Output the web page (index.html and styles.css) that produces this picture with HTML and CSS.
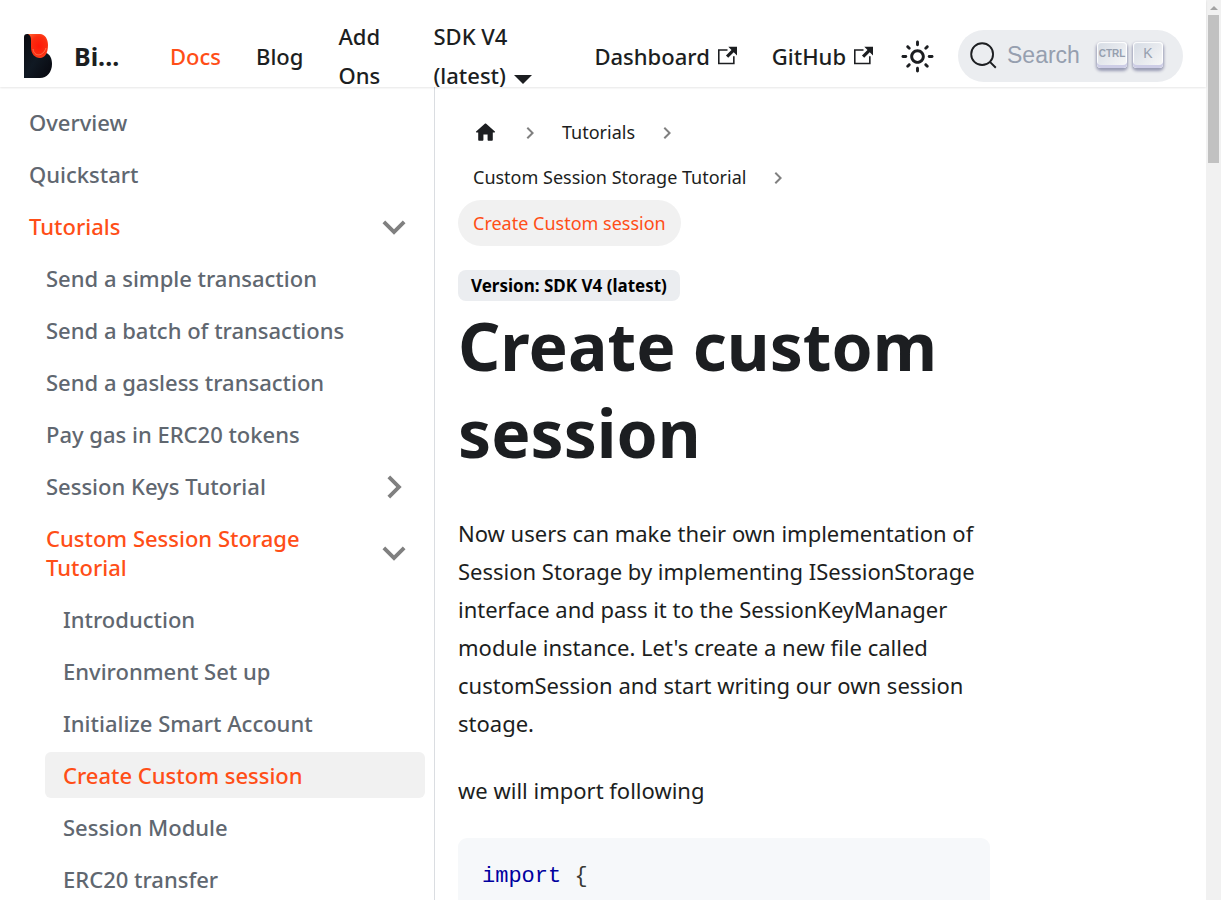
FILE: index.html
```html
<!DOCTYPE html>
<html lang="en">
<head>
<meta charset="utf-8">
<meta name="viewport" content="width=device-width, initial-scale=1">
<title>Create custom session</title>
<link rel="stylesheet" href="styles.css">
</head>
<body>
<svg class="defs" aria-hidden="true">
  <symbol id="chevron" viewBox="0 0 24 24"><path fill="currentColor" d="M7.41 15.41 12 10.83l4.59 4.58L18 14l-6-6-6 6z"/></symbol>
  <symbol id="external" viewBox="0 0 24 24"><path fill="currentColor" d="M21 13v10h-21v-19h12v2h-10v15h17v-8h2zm3-12h-10.988l4.035 4-6.977 7.07 2.828 2.828 6.977-7.07 4.125 4.172v-11z"/></symbol>
</svg>
<div class="app">
  <header class="navbar">
    <a class="brand" href="#">
      <svg class="logo" viewBox="0 0 29 45" aria-hidden="true">
        <defs>
          <linearGradient id="ink" x1="0" y1="0" x2="1" y2="1"><stop offset="0" stop-color="#0b0a10"/><stop offset=".5" stop-color="#101923"/><stop offset="1" stop-color="#07070d"/></linearGradient>
          <radialGradient id="flame" cx=".55" cy=".5" r=".65"><stop offset="0" stop-color="#ff1808"/><stop offset=".6" stop-color="#fb2d10"/><stop offset="1" stop-color="#ff5a2c"/></radialGradient>
        </defs>
        <path fill="url(#ink)" d="M0 3Q0 0 3 0h10l9 19c4 1 6 6 6 11 0 8-5 14-12 14H0z"/>
        <path fill="url(#flame)" d="M4 0h12c5 0 8 5 8 11 0 8-3 13-8 13S7 20 7 13V6C7 3 6 1 4 0z"/>
        <path fill="none" stroke="#ff704c" stroke-width="1" d="M9 15c1 8 10 8 13-1"/>
      </svg>
      <b class="brand-name">Bi...</b>
    </a>
    <nav class="links" aria-label="Main">
      <a class="active" href="#">Docs</a>
      <a href="#">Blog</a>
      <a class="addons" href="#">Add Ons</a>
      <a class="version-menu" href="#">SDK V4 (latest)<span class="caret"></span></a>
      <a href="#">Dashboard<svg class="ext" aria-hidden="true"><use href="#external"/></svg></a>
      <a href="#">GitHub<svg class="ext" aria-hidden="true"><use href="#external"/></svg></a>
    </nav>
    <div class="tools">
      <button class="theme" type="button" aria-label="Switch theme">
        <svg viewBox="0 0 24 24" aria-hidden="true"><path fill="currentColor" d="M12,9c1.65,0,3,1.35,3,3s-1.35,3-3,3s-3-1.35-3-3S10.35,9,12,9 M12,7c-2.76,0-5,2.24-5,5s2.24,5,5,5s5-2.24,5-5 S14.76,7,12,7L12,7z M2,13l2,0c0.55,0,1-0.45,1-1s-0.45-1-1-1l-2,0c-0.55,0-1,0.45-1,1S1.45,13,2,13z M20,13l2,0c0.55,0,1-0.45,1-1 s-0.45-1-1-1l-2,0c-0.55,0-1,0.45-1,1S19.45,13,20,13z M11,2v2c0,0.55,0.45,1,1,1s1-0.45,1-1V2c0-0.55-0.45-1-1-1S11,1.45,11,2z M11,20v2c0,0.55,0.45,1,1,1s1-0.45,1-1v-2c0-0.55-0.45-1-1-1C11.45,19,11,19.45,11,20z M5.99,4.58c-0.39-0.39-1.03-0.39-1.41,0 c-0.39,0.39-0.39,1.03,0,1.41l1.06,1.06c0.39,0.39,1.03,0.39,1.41,0s0.39-1.03,0-1.41L5.99,4.58z M18.36,16.95 c-0.39-0.39-1.03-0.39-1.41,0c-0.39,0.39-0.39,1.03,0,1.41l1.06,1.06c0.39,0.39,1.03,0.39,1.41,0c0.39-0.39,0.39-1.03,0-1.41 L18.36,16.95z M19.42,5.99c0.39-0.39,0.39-1.03,0-1.41c-0.39-0.39-1.03-0.39-1.41,0l-1.06,1.06c-0.39,0.39-0.39,1.03,0,1.41 s1.03,0.39,1.41,0L19.42,5.99z M7.05,18.36c0.39-0.39,0.39-1.03,0-1.41c-0.39-0.39-1.03-0.39-1.41,0l-1.06,1.06 c-0.39,0.39-0.39,1.03,0,1.41s1.03,0.39,1.41,0L7.05,18.36z"/></svg>
      </button>
      <button class="search" type="button">
        <svg viewBox="0 0 20 20" aria-hidden="true"><path d="M14.386 14.386l4.0877 4.0877-4.0877-4.0877c-2.9418 2.9419-7.7115 2.9419-10.6533 0-2.9419-2.9418-2.9419-7.7115 0-10.6533 2.9418-2.9419 7.7115-2.9419 10.6533 0 2.9419 2.9418 2.9419 7.7115 0 10.6533z" stroke="currentColor" fill="none" stroke-width="1.3"/></svg>
        <span>Search</span>
        <kbd class="ctrl">CTRL</kbd><kbd>K</kbd>
      </button>
    </div>
  </header>
  <div class="body">
    <aside class="sidebar">
      <ul class="menu">
        <li><a href="#">Overview</a></li>
        <li><a href="#">Quickstart</a></li>
        <li>
          <a class="on" href="#">Tutorials<svg class="chev down" aria-hidden="true"><use href="#chevron"/></svg></a>
          <ul class="menu sub">
            <li><a href="#">Send a simple transaction</a></li>
            <li><a href="#">Send a batch of transactions</a></li>
            <li><a href="#">Send a gasless transaction</a></li>
            <li><a href="#">Pay gas in ERC20 tokens</a></li>
            <li><a href="#">Session Keys Tutorial<svg class="chev right" aria-hidden="true"><use href="#chevron"/></svg></a></li>
            <li>
              <a class="on" href="#">Custom Session Storage Tutorial<svg class="chev down" aria-hidden="true"><use href="#chevron"/></svg></a>
              <ul class="menu sub">
                <li><a href="#">Introduction</a></li>
                <li><a href="#">Environment Set up</a></li>
                <li><a href="#">Initialize Smart Account</a></li>
                <li><a class="on current" href="#">Create Custom session</a></li>
                <li><a href="#">Session Module</a></li>
                <li><a href="#">ERC20 transfer</a></li>
              </ul>
            </li>
          </ul>
        </li>
      </ul>
    </aside>
    <main class="content">
      <nav aria-label="Breadcrumbs">
        <ul class="crumbs">
          <li><a href="#" aria-label="Home"><svg class="home" viewBox="0 0 24 24" aria-hidden="true"><path fill="currentColor" d="M10 19v-5h4v5c0 .55.45 1 1 1h3c.55 0 1-.45 1-1v-7h1.700c.46 0 .68-.57.33-.87L12.670 3.600c-.38-.34-.96-.34-1.340 0l-8.360 7.530c-.34.3-.13.87.33.87H5v7c0 .55.45 1 1 1h3c.55 0 1-.45 1-1z"/></svg></a><svg class="sep" aria-hidden="true"><use href="#chevron"/></svg></li>
          <li><a href="#">Tutorials</a><svg class="sep" aria-hidden="true"><use href="#chevron"/></svg></li>
          <li><a href="#">Custom Session Storage Tutorial</a><svg class="sep" aria-hidden="true"><use href="#chevron"/></svg></li>
          <li><span class="here">Create Custom session</span></li>
        </ul>
      </nav>
      <span class="badge">Version: SDK V4 (latest)</span>
      <h1>Create custom session</h1>
      <p>Now users can make their own implementation of Session Storage by implementing ISessionStorage interface and pass it to the SessionKeyManager module instance. Let's create a new file called customSession and start writing our own session stoage.</p>
      <p>we will import following</p>
      <pre><code><span class="kw">import</span> {</code></pre>
    </main>
  </div>
</div>
<div class="scrollbar" aria-hidden="true"><span class="arrow"></span><span class="thumb"></span></div>
</body>
</html>
```

FILE: styles.css
```css
* { box-sizing: border-box; }
.defs { position: absolute; width: 0; height: 0; }
body {
  margin: 0;
  height: 100vh;
  overflow: hidden;
  display: grid;
  grid-template-columns: 1fr 15px;
  font: 22px/38px "Noto Sans", sans-serif;
  color: #1c1e21;
  background: #fff;
}
a { color: inherit; text-decoration: none; }
button { border: 0; padding: 0; background: none; color: inherit; font: inherit; }
ul { list-style: none; margin: 0; padding: 0; }

.app { min-width: 0; height: 100vh; display: flex; flex-direction: column; }
.navbar {
  flex: none;
  height: 87px;
  padding: 25px 23px 0 24px;
  display: flex;
  align-items: center;
  position: relative;
  z-index: 1;
  box-shadow: 0 1px 2px rgba(0, 0, 0, .1);
  line-height: 39px;
  font-weight: 500;
}
.brand { display: flex; align-items: center; gap: 21px; width: 146px; flex: none; }
.logo { width: 29px; height: 45px; }
.brand-name { font-size: 25px; }
.links { display: flex; align-items: center; gap: 35px; white-space: nowrap; }
.active, .on { color: #ff4e17; }
.links .addons { width: 60px; white-space: normal; }
.links .version-menu { width: 126px; white-space: normal; }
.caret {
  display: inline-block;
  margin-left: 8px;
  border: 9px solid transparent;
  border-top-color: currentColor;
  border-bottom: 0;
}
.ext { width: 19px; height: 19px; margin-left: 8px; }
.tools { margin-left: auto; display: flex; align-items: center; gap: 23px; }
.theme { width: 35px; height: 35px; }
.theme svg { display: block; }
.search {
  display: flex;
  align-items: center;
  width: 225px;
  height: 52px;
  padding: 0 20px 2px 11px;
  border-radius: 26px;
  background: #ebedf0;
  font-family: "Liberation Sans", sans-serif;
  font-size: 23px;
}
.search svg { width: 29px; height: 29px; }
.search span { margin: 0 auto 0 9px; color: #969faf; }
.search kbd {
  width: 30px;
  height: 26px;
  margin-left: 6px;
  border-radius: 4px;
  background: linear-gradient(-225deg, #d5dbe4, #f8f8f8);
  box-shadow: inset 0 -3px 0 #cdcde6, inset 0 0 1px 1px #fff, 0 2px 3px 1px rgba(30, 35, 90, .4);
  font: 14px/22px "Liberation Sans", sans-serif;
  color: #969faf;
}
.search .ctrl { font: bold 10px/24px "Liberation Sans Narrow", "Liberation Sans", sans-serif; }

.body { flex: 1; min-height: 0; display: grid; grid-template-columns: 435px 1fr; }
.sidebar { padding: 12px 9px 0 11px; border-right: 1px solid #dadde1; overflow: hidden; }
.menu { display: flex; flex-direction: column; gap: 6px; color: #606770; font-weight: 500; line-height: 29px; }
.sub { margin-top: 6px; padding-left: 17px; }
.menu a {
  display: flex;
  align-items: center;
  justify-content: space-between;
  padding: 9px 8px 8px 18px;
  border-radius: 6px;
}
.current { background: #f1f1f1; }
.chev { width: 46px; height: 46px; margin: -9px 0; flex: none; color: #808080; }
.down { transform: rotate(180deg); }
.right { transform: rotate(90deg); }

.content { padding: 23px 28% 0 23px; overflow: hidden; }
.crumbs { display: flex; flex-wrap: wrap; font-size: 18px; line-height: 45px; }
.crumbs li { display: flex; align-items: center; }
.crumbs a, .here { padding: 0 15px; }
.home { display: block; width: 25px; height: 25px; }
.sep { width: 24px; height: 24px; margin: 0 5px; color: #808080; transform: rotate(90deg); }
.here { border-radius: 23px; background: #f1f1f1; color: #ff4e17; line-height: 46px; }
.badge {
  display: inline-block;
  margin-top: 24px;
  padding: 0 13px;
  border-radius: 8px;
  background: #ebedf0;
  color: #000;
  font-size: 17px;
  font-weight: 700;
  line-height: 31px;
}
h1 { margin: 0 0 38px; font-size: 66px; line-height: 87px; }
p { margin: 0 0 29px; }
pre {
  margin: 0;
  padding: 22px 24px;
  border-radius: 9px;
  background: #f6f8fa;
  color: #393a34;
  font: 22px/33px "Liberation Mono", monospace;
  height: 200px;
}
code { font: inherit; }
.kw { color: #00009f; }

.scrollbar { background: #f1f1f1; display: flex; flex-direction: column; align-items: center; }
.arrow { margin: 6px 0 5px; border: 4px solid transparent; border-top: 0; border-bottom-color: #a3a3a3; }
.thumb { width: 11px; height: 148px; background: #c1c1c1; }
```
